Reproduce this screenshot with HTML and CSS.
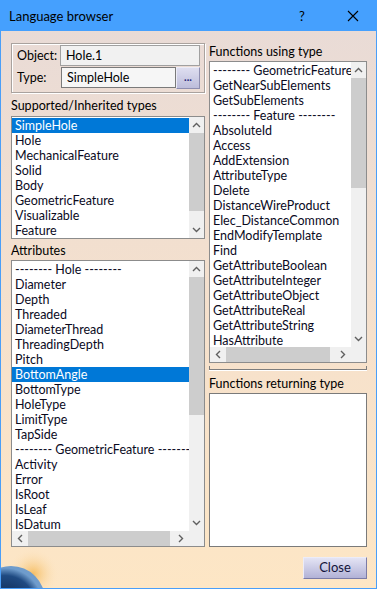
FILE: index.html
```html
<!DOCTYPE html>
<html lang="en">
<head>
    <meta charset="UTF-8">
    <title>Language browser</title>
    <link rel="stylesheet" href="styles.css">
</head>
<body>
<div class="window">
    <div class="titlebar">
        <span class="title">Language browser</span>
        <span class="help">?</span>
        <span class="close-x">
            <svg width="12" height="12" viewBox="0 0 12 12"><path d="M1 1L11 11M11 1L1 11" stroke="#000" stroke-width="1.1"/></svg>
        </span>
    </div>

    <div class="client">
        <div class="globe">
            <svg width="60" height="40" viewBox="0 0 60 40">
                <defs>
                    <radialGradient id="glow" cx="32" cy="26" r="26" gradientUnits="userSpaceOnUse">
                        <stop offset="0" stop-color="#f4b650" stop-opacity="0.85"/>
                        <stop offset="1" stop-color="#fde6c5" stop-opacity="0"/>
                    </radialGradient>
                    <radialGradient id="sphere" cx="4" cy="58" r="38" gradientUnits="userSpaceOnUse">
                        <stop offset="0" stop-color="#0a1f42"/>
                        <stop offset="0.8" stop-color="#1f4a82"/>
                        <stop offset="1" stop-color="#6f9ccc"/>
                    </radialGradient>
                </defs>
                <rect width="60" height="40" fill="url(#glow)"/>
                <circle cx="10" cy="52" r="34" fill="url(#sphere)"/>
            </svg>
        </div>

        <div class="col col-left">
            <div class="groupbox">
                <div class="field-row">
                    <span class="field-label">Object:</span>
                    <div class="field field-obj">Hole.1</div>
                </div>
                <div class="field-row">
                    <span class="field-label">Type:</span>
                    <div class="field field-type">SimpleHole</div>
                    <div class="dots-btn">...</div>
                </div>
            </div>

            <div class="caption cap-types">Supported/Inherited types</div>
            <div class="listbox lb-types">
                <ul class="items">
                    <li class="selected">SimpleHole</li>
                    <li>Hole</li>
                    <li>MechanicalFeature</li>
                    <li>Solid</li>
                    <li>Body</li>
                    <li>GeometricFeature</li>
                    <li>Visualizable</li>
                    <li>Feature</li>
                </ul>
                <div class="vscroll">
                    <div class="arrow"><svg width="9" height="6" viewBox="0 0 9 6"><path d="M1 5L4.5 1.5L8 5" fill="none" stroke="#606060" stroke-width="1.4"/></svg></div>
                    <div class="track"><div class="thumb thumb-types"></div></div>
                    <div class="arrow"><svg width="9" height="6" viewBox="0 0 9 6"><path d="M1 1L4.5 4.5L8 1" fill="none" stroke="#606060" stroke-width="1.4"/></svg></div>
                </div>
            </div>

            <div class="caption cap-attr">Attributes</div>
            <div class="listbox lb-attr has-h">
                <ul class="items">
                    <li>-------- Hole --------</li>
                    <li>Diameter</li>
                    <li>Depth</li>
                    <li>Threaded</li>
                    <li>DiameterThread</li>
                    <li>ThreadingDepth</li>
                    <li>Pitch</li>
                    <li class="selected">BottomAngle</li>
                    <li>BottomType</li>
                    <li>HoleType</li>
                    <li>LimitType</li>
                    <li>TapSide</li>
                    <li>-------- GeometricFeature --------</li>
                    <li>Activity</li>
                    <li>Error</li>
                    <li>IsRoot</li>
                    <li>IsLeaf</li>
                    <li>IsDatum</li>
                </ul>
                <div class="vscroll">
                    <div class="arrow"><svg width="9" height="6" viewBox="0 0 9 6"><path d="M1 5L4.5 1.5L8 5" fill="none" stroke="#606060" stroke-width="1.4"/></svg></div>
                    <div class="track"><div class="thumb thumb-attr"></div></div>
                    <div class="arrow"><svg width="9" height="6" viewBox="0 0 9 6"><path d="M1 1L4.5 4.5L8 1" fill="none" stroke="#606060" stroke-width="1.4"/></svg></div>
                </div>
                <div class="hscroll">
                    <div class="arrow"><svg width="6" height="9" viewBox="0 0 6 9"><path d="M5 1L1.5 4.5L5 8" fill="none" stroke="#606060" stroke-width="1.4"/></svg></div>
                    <div class="track"><div class="thumb thumb-attr-h"></div></div>
                    <div class="arrow"><svg width="6" height="9" viewBox="0 0 6 9"><path d="M1 1L4.5 4.5L1 8" fill="none" stroke="#606060" stroke-width="1.4"/></svg></div>
                </div>
                <div class="corner"></div>
            </div>
        </div>

        <div class="col col-right">
            <div class="caption cap-funcs">Functions using type</div>
            <div class="listbox lb-funcs has-h">
                <ul class="items">
                    <li>-------- GeometricFeature --------</li>
                    <li>GetNearSubElements</li>
                    <li>GetSubElements</li>
                    <li>-------- Feature --------</li>
                    <li>AbsoluteId</li>
                    <li>Access</li>
                    <li>AddExtension</li>
                    <li>AttributeType</li>
                    <li>Delete</li>
                    <li>DistanceWireProduct</li>
                    <li>Elec_DistanceCommon</li>
                    <li>EndModifyTemplate</li>
                    <li>Find</li>
                    <li>GetAttributeBoolean</li>
                    <li>GetAttributeInteger</li>
                    <li>GetAttributeObject</li>
                    <li>GetAttributeReal</li>
                    <li>GetAttributeString</li>
                    <li>HasAttribute</li>
                </ul>
                <div class="vscroll">
                    <div class="arrow"><svg width="9" height="6" viewBox="0 0 9 6"><path d="M1 5L4.5 1.5L8 5" fill="none" stroke="#606060" stroke-width="1.4"/></svg></div>
                    <div class="track"><div class="thumb thumb-funcs"></div></div>
                    <div class="arrow"><svg width="9" height="6" viewBox="0 0 9 6"><path d="M1 1L4.5 4.5L8 1" fill="none" stroke="#606060" stroke-width="1.4"/></svg></div>
                </div>
                <div class="hscroll">
                    <div class="arrow"><svg width="6" height="9" viewBox="0 0 6 9"><path d="M5 1L1.5 4.5L5 8" fill="none" stroke="#606060" stroke-width="1.4"/></svg></div>
                    <div class="track"><div class="thumb thumb-funcs-h"></div></div>
                    <div class="arrow"><svg width="6" height="9" viewBox="0 0 6 9"><path d="M1 1L4.5 4.5L1 8" fill="none" stroke="#606060" stroke-width="1.4"/></svg></div>
                </div>
                <div class="corner"></div>
            </div>
            <div class="ridge"></div>

            <div class="caption cap-returns">Functions returning type</div>
            <div class="listbox lb-returns"></div>

            <div class="footer">
                <div class="close-btn">Close</div>
            </div>
        </div>
    </div>
</div>
</body>
</html>
```

FILE: styles.css
```css
* { box-sizing: border-box; }
body { margin: 0; font-family: Lato, "Noto Sans", sans-serif; font-size: 12.5px; color: #000; }

.window { width: 377px; height: 589px; display: flex; flex-direction: column; overflow: hidden; }

.titlebar { height: 31px; flex: none; background: #45a0fe; display: flex; align-items: center; padding-left: 9px; }
.title { flex: 1; font-size: 13px; }
.help { width: 12px; margin-right: 36px; font-size: 13px; }
.close-x { width: 12px; margin-right: 18px; display: flex; }

.client {
    flex: 1;
    position: relative;
    display: flex;
    gap: 4px;
    padding: 0 9px 0 10px;
    border: 1px solid #4a9ef8;
    border-top: 0;
    background: linear-gradient(#e9dbd6, #f6e1cc 55%, #fde6c5);
}
.globe { position: absolute; left: 0; bottom: 0; width: 60px; height: 40px; }
.globe svg { display: block; }

.col { display: flex; flex-direction: column; position: relative; }
.col-left { width: 194px; }
.col-right { width: 158px; }

/* object / type group */
.groupbox {
    margin-top: 12px;
    height: 50px;
    padding: 1px 4px 0 5px;
    border: 1px solid #a9a29e;
    box-shadow: inset 1px 1px 0 #fff, 1px 1px 0 #fff;
    display: flex;
    flex-direction: column;
    gap: 1px;
}
.field-row { display: flex; align-items: center; height: 21px; }
.field-label { width: 43px; }
.field { height: 21px; line-height: 19px; padding-left: 5px; border: 1px solid #a0a0a0; background: #f1f1f1; }
.field-obj { width: 140px; }
.field-type { width: 115px; margin-left: 1px; background: #f6f6f6; border-color: #7a7a7a; }
.dots-btn {
    width: 24px;
    height: 22px;
    line-height: 17px;
    text-align: center;
    font-size: 11px;
    color: #25257a;
    font-weight: bold;
    background: linear-gradient(#dedef0, #bdbddb);
    border: 1px solid #8e8eb0;
    border-top-color: #ececf6;
    border-left-color: #ececf6;
}

.caption { height: 15px; line-height: 15px; }
.cap-types { margin-top: 5px; }
.cap-attr { margin-top: 4px; }
.cap-funcs { margin-top: 13px; }
.cap-returns { margin-top: 6px; }

/* list boxes */
.listbox {
    background: #fff;
    border: 1px solid #8c8c8c;
    display: grid;
    grid-template-columns: 1fr 15px;
    grid-template-rows: 1fr;
    overflow: hidden;
}
.listbox.has-h { grid-template-rows: 1fr 15px; }
.lb-types { margin-top: 3px; height: 123px; }
.lb-attr { margin-top: 2px; height: 287px; }
.lb-funcs { margin-top: 2px; height: 302px; }
.lb-returns { margin-top: 2px; height: 154px; display: block; border-color: #7a7a7a; }

.items { list-style: none; margin: 0; padding: 1px 0 0; overflow: hidden; min-width: 0; }
.items li { height: 15px; line-height: 15px; padding-left: 3px; white-space: nowrap; overflow: hidden; color: #0a0a1e; }
.items li.selected { background: #0078d7; color: #fff; }

.vscroll { background: #f0f0f0; display: flex; flex-direction: column; }
.vscroll .arrow { height: 16px; display: flex; align-items: center; justify-content: center; flex: none; }
.vscroll .track { flex: 1; }
.vscroll .thumb { background: #cdcdcd; }
.thumb-types { height: 78px; }
.thumb-attr { height: 138px; }
.thumb-funcs { height: 110px; }

.hscroll { background: #f0f0f0; display: flex; }
.hscroll .arrow { width: 16px; display: flex; align-items: center; justify-content: center; flex: none; }
.hscroll .track { flex: 1; display: flex; }
.hscroll .thumb { background: #cdcdcd; }
.thumb-attr-h { width: 142px; }
.thumb-funcs-h { width: 104px; }
.corner { background: #f0f0f0; }

.ridge {
    margin-top: 3px;
    height: 4px;
    border: 1px solid #7d7d7d;
    border-top: 0;
    box-shadow: 0 1px 0 #fff;
}

.footer { display: flex; justify-content: flex-end; margin-top: 10px; }
.close-btn {
    width: 64px;
    height: 22px;
    line-height: 19px;
    text-align: center;
    font-size: 13px;
    color: #14143a;
    background: linear-gradient(#e4e4f4, #b2b2d6);
    border: 1px solid #7b7ba6;
    border-top-color: #ececf8;
    border-left-color: #ececf8;
}
```
